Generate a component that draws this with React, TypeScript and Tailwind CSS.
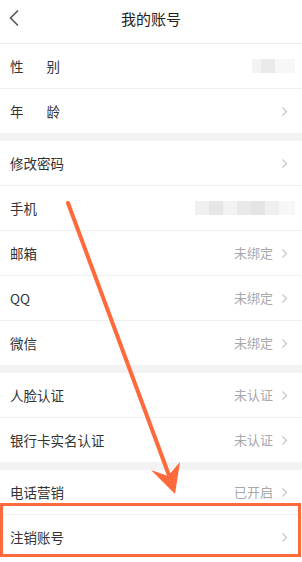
type Row = {
  label: React.ReactNode;
  value?: string;
  blur?: 'short' | 'long';
  arrow?: boolean;
};

const sections: Row[][] = [
  [
    { label: <span className="flex gap-[23px]"><span>性</span><span>别</span></span>, blur: 'short', arrow: false },
    { label: <span className="flex gap-[23px]"><span>年</span><span>龄</span></span>, arrow: true },
  ],
  [
    { label: '修改密码', arrow: true },
    { label: '手机', blur: 'long', arrow: false },
    { label: '邮箱', value: '未绑定', arrow: true },
    { label: 'QQ', value: '未绑定', arrow: true },
    { label: '微信', value: '未绑定', arrow: true },
  ],
  [
    { label: '人脸认证', value: '未认证', arrow: true },
    { label: '银行卡实名认证', value: '未认证', arrow: true },
  ],
  [
    { label: '电话营销', value: '已开启', arrow: true },
    { label: '注销账号', arrow: true },
  ],
];

function Chevron() {
  return (
    <svg width="7" height="11" viewBox="0 0 7 11" className="ml-[8px] mr-[3px]">
      <polyline points="1.5,1.5 5.5,5.5 1.5,9.5" fill="none" stroke="#c6c6c6" strokeWidth="1.2" />
    </svg>
  );
}

function BlurValue({ kind }: { kind: 'short' | 'long' }) {
  // 模糊处理的个人信息
  if (kind === 'short') {
    return (
      <div className="flex h-[14px]">
        <div className="w-[9px] bg-[#f3f3f3]" />
        <div className="w-[14px] bg-[#eaeaea]" />
        <div className="w-[20px] bg-[#f7f7f7]" />
      </div>
    );
  }
  return (
    <div className="flex h-[14px]">
      <div className="w-[14px] bg-[#f0f0f0]" />
      <div className="w-[14px] bg-[#e6e6e6]" />
      <div className="w-[14px] bg-[#f2f2f2]" />
      <div className="w-[14px] bg-[#e9e9e9]" />
      <div className="w-[14px] bg-[#e4e4e4]" />
      <div className="w-[14px] bg-[#efefef]" />
      <div className="w-[16px] bg-[#f7f7f7]" />
    </div>
  );
}

function ListRow({ row }: { row: Row }) {
  return (
    <div className="h-[44px] flex items-center justify-between pl-[10px] pr-[11px] bg-white">
      <div className="text-[13.5px] text-[#333]">{row.label}</div>
      <div className="flex items-center">
        {row.value && <span className="text-[13px] text-[#a8a8a8]">{row.value}</span>}
        {row.blur && <div className="mr-[-4px]"><BlurValue kind={row.blur} /></div>}
        {row.arrow && <Chevron />}
      </div>
    </div>
  );
}

export default function App() {
  return (
    <div
      className="relative w-[302px] h-[562px] overflow-hidden bg-white"
      style={{ fontFamily: '"Noto Sans CJK SC", "Noto Sans", sans-serif' }}
    >
      {/* Header */}
      <div className="h-[44px] flex items-center justify-center relative border-b border-[#ececec]">
        <svg
          className="absolute left-[8px] top-[9px]"
          width="12"
          height="18"
          viewBox="0 0 12 18"
        >
          <polyline points="10,1.5 2.5,9 10,16.5" fill="none" stroke="#555" strokeWidth="1.6" />
        </svg>
        <span className="text-[15px] text-[#222] -mt-[4px]">我的账号</span>
      </div>

      {sections.map((sec, i) => (
        <div key={i}>
          {i > 0 && <div className="h-[8px] bg-[#f3f3f3]" />}
          {sec.map((row, j) => (
            <div key={j}>
              {j > 0 && <div className="h-px bg-[#f0f0f0]" />}
              <ListRow row={row} />
            </div>
          ))}
        </div>
      ))}

      {/* 标注框 */}
      <div className="absolute left-0 top-[503px] w-[301px] h-[54px] border-[3px] border-[#ff6a3c]" />

      {/* 标注箭头 */}
      <svg className="absolute left-0 top-0" width="302" height="562" viewBox="0 0 302 562">
        <line x1="68" y1="203" x2="170" y2="478" stroke="#ff6a3c" strokeWidth="4" strokeLinecap="round" />
        <polygon points="175,494 151,470 168,476 180,462" fill="#ff6a3c" />
      </svg>
    </div>
  );
}
